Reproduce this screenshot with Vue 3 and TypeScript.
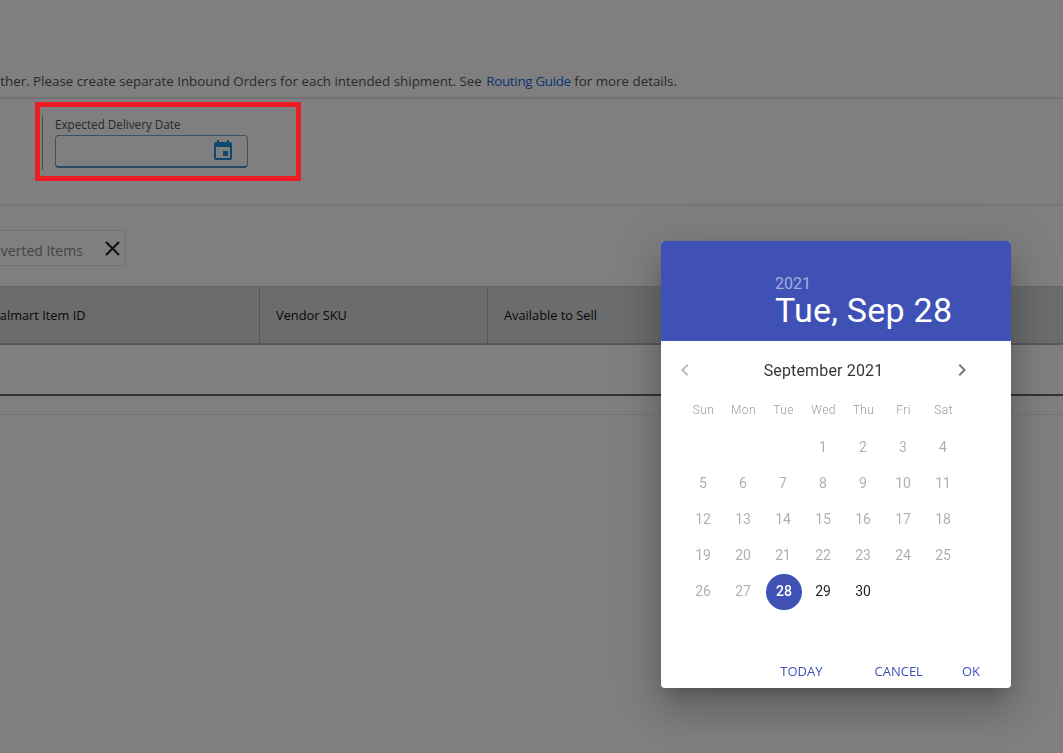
<script setup lang="ts">
const weekdays = ['Sun', 'Mon', 'Tue', 'Wed', 'Thu', 'Fri', 'Sat']
const blanks = [1, 2, 3]
const days = Array.from({ length: 30 }, (_, i) => i + 1)
const selected = 28
</script>

<template>
  <div class="page">
    <div class="notice">
      <p class="notice__text">
        Please ship these items together. Please create separate Inbound Orders for each intended shipment. See
        <a class="notice__link">Routing Guide</a> for more details.
      </p>
    </div>

    <section class="form-row">
      <div class="field">
        <label class="field__label">Expected Delivery Date</label>
        <div class="field__input">
          <svg width="24" height="24" viewBox="0 0 24 24" fill="currentColor">
            <path d="M17 12h-5v5h5v-5zM16 1v2H8V1H6v2H5c-1.11 0-1.99.9-1.99 2L3 19c0 1.1.89 2 2 2h14c1.1 0 2-.9 2-2V5c0-1.1-.9-2-2-2h-1V1h-2zm3 18H5V8h14v11z" />
          </svg>
        </div>
      </div>
    </section>

    <div class="chips">
      <div class="chip">
        <span class="chip__text">Converted Items</span>
        <svg width="24" height="24" viewBox="0 0 24 24" fill="none" stroke="#222" stroke-width="2">
          <path d="M6 6l13 13M19 6L6 19" />
        </svg>
      </div>
    </div>

    <div class="table-head">
      <div class="table-head__cell table-head__cell--first">Walmart Item ID</div>
      <div class="table-head__cell table-head__cell--sku">Vendor SKU</div>
      <div class="table-head__cell">Available to Sell</div>
    </div>
    <div class="table-body"></div>
    <div class="table-foot"></div>
  </div>

  <div class="scrim"></div>
  <div class="annotation"></div>

  <div class="picker">
    <header class="picker__head">
      <span class="picker__year">2021</span>
      <span class="picker__date">Tue, Sep 28</span>
    </header>

    <div class="picker__switch">
      <svg class="picker__arrow picker__arrow--off" width="24" height="24" viewBox="0 0 24 24" fill="currentColor">
        <path d="M15.41 7.41L14 6l-6 6 6 6 1.41-1.41L10.83 12z" />
      </svg>
      <span class="picker__month">September 2021</span>
      <svg class="picker__arrow" width="24" height="24" viewBox="0 0 24 24" fill="currentColor">
        <path d="M10 6L8.59 7.41 13.17 12l-4.58 4.59L10 18l6-6z" />
      </svg>
    </div>

    <div class="picker__weekdays">
      <span v-for="d in weekdays" :key="d">{{ d }}</span>
    </div>

    <div class="picker__days">
      <span v-for="b in blanks" :key="'b' + b"></span>
      <span
        v-for="d in days"
        :key="d"
        class="day"
        :class="{ 'day--on': d > selected, 'day--selected': d === selected }"
      >{{ d }}</span>
    </div>

    <footer class="picker__actions">
      <button class="picker__btn picker__btn--today">TODAY</button>
      <button class="picker__btn picker__btn--cancel">CANCEL</button>
      <button class="picker__btn">OK</button>
    </footer>
  </div>
</template>

<style>
html,
body {
  height: 100%;
  margin: 0;
  overflow: hidden;
  background: #fff;
}
</style>

<style scoped>
.page {
  width: 1063px;
  height: 753px;
  overflow: hidden;
  font-family: "Open Sans", "Liberation Sans", sans-serif;
  color: #555;
}
.notice {
  height: 25px;
  padding-top: 72px;
  border-bottom: 2px solid #e4e4e4;
}
.notice__text {
  margin: 0 0 0 -176px;
  font-size: 13.35px;
  line-height: 18px;
  white-space: nowrap;
}
.notice__link {
  color: #1668e0;
  margin-left: 1px;
  letter-spacing: -0.3px;
}
.form-row {
  height: 107px;
  box-sizing: border-box;
  padding: 16px 0 0 42px;
  border-bottom: 2px solid #eee;
}
.field {
  width: 206px;
  height: 55px;
  box-sizing: border-box;
  padding-left: 12px;
  border-left: 1px solid #999;
}
.field__label {
  display: block;
  font-size: 11.7px;
  line-height: 18px;
  color: #555;
}
.field__input {
  width: 193px;
  height: 33px;
  margin-top: 2px;
  box-sizing: border-box;
  border: 1px solid #6fa8cc;
  border-bottom: 2px solid #4a94c4;
  border-radius: 4px;
  display: flex;
  align-items: center;
  justify-content: flex-end;
  padding-right: 12px;
  color: #1a90dc;
}
.chips {
  height: 80px;
  box-sizing: border-box;
  padding-top: 24px;
}
.chip {
  width: 152px;
  height: 36px;
  margin-left: -26px;
  box-sizing: border-box;
  border: 1px solid #e2e2e2;
  border-radius: 4px;
  display: flex;
  align-items: center;
  justify-content: space-between;
  padding: 0 1px 0 0;
}
.chip__text {
  margin-top: 5px;
  font-size: 14px;
  color: #888;
  white-space: nowrap;
}
.table-head {
  height: 59px;
  box-sizing: border-box;
  background: #d7d8da;
  border-top: 1px solid #ccc;
  border-bottom: 2px solid #b0b0b0;
  display: flex;
  align-items: stretch;
}
.table-head__cell {
  display: flex;
  align-items: center;
  padding-left: 16px;
  font-size: 12.8px;
  color: #111;
  white-space: nowrap;
}
.table-head__cell--first {
  width: 260px;
  box-sizing: border-box;
  padding-left: 0;
  text-indent: -12px;
  border-right: 1px solid #aaa;
}
.table-head__cell--sku {
  width: 228px;
  box-sizing: border-box;
  border-right: 1px solid #aaa;
}
.table-body {
  height: 49px;
  border-bottom: 2px solid #666;
}
.table-foot {
  height: 18px;
  border-bottom: 1px solid #e9e9e9;
}
.scrim {
  position: fixed;
  inset: 0;
  background: rgba(0, 0, 0, 0.5);
}
.annotation {
  position: absolute;
  left: 35px;
  top: 102px;
  width: 266px;
  height: 79px;
  box-sizing: border-box;
  border: 5px solid #ed1c24;
}
.picker {
  position: absolute;
  left: 661px;
  top: 241px;
  width: 350px;
  height: 447px;
  display: flex;
  flex-direction: column;
  background: #fff;
  border-radius: 4px;
  overflow: hidden;
  font-family: Roboto, "Liberation Sans", sans-serif;
  box-shadow: 0 11px 15px -7px rgba(0, 0, 0, 0.2), 0 24px 38px 3px rgba(0, 0, 0, 0.14), 0 9px 46px 8px rgba(0, 0, 0, 0.12);
}
.picker__head {
  height: 100px;
  box-sizing: border-box;
  padding: 34px 0 0 114px;
  background: #3f51b5;
  color: #fff;
  display: flex;
  flex-direction: column;
  align-items: flex-start;
}
.picker__year {
  font-size: 16px;
  line-height: 17px;
  color: rgba(255, 255, 255, 0.54);
}
.picker__date {
  font-size: 34px;
  line-height: 36px;
  letter-spacing: 0.25px;
}
.picker__switch {
  width: 301px;
  margin: 17px 0 0 12px;
  display: flex;
  align-items: center;
  justify-content: space-between;
}
.picker__arrow {
  color: rgba(0, 0, 0, 0.54);
}
.picker__arrow--off {
  color: rgba(0, 0, 0, 0.26);
}
.picker__month {
  font-size: 16px;
  letter-spacing: 0.15px;
  color: rgba(0, 0, 0, 0.8);
}
.picker__weekdays,
.picker__days {
  display: grid;
  grid-template-columns: repeat(7, 40px);
  margin-left: 22px;
  text-align: center;
}
.picker__weekdays {
  margin-top: 20px;
  margin-left: 22.5px;
  font-size: 12px;
  font-weight: 300;
  line-height: 16px;
  letter-spacing: 0.4px;
  color: rgba(0, 0, 0, 0.42);
}
.picker__days {
  margin-top: 11px;
  grid-auto-rows: 36px;
}
.day {
  display: flex;
  align-items: center;
  justify-content: center;
  font-size: 14px;
  color: rgba(0, 0, 0, 0.32);
}
.day--on {
  color: rgba(0, 0, 0, 0.87);
}
.day--selected {
  width: 36px;
  height: 36px;
  margin: 1px 0 0 3px;
  padding-bottom: 2px;
  box-sizing: border-box;
  border-radius: 50%;
  background: #3f51b5;
  color: #fff;
  font-weight: 500;
}
.picker__actions {
  margin-top: auto;
  height: 26px;
  box-sizing: border-box;
  padding-right: 31px;
  display: flex;
  justify-content: flex-end;
  align-items: flex-start;
}
.picker__btn {
  padding: 0;
  border: 0;
  background: none;
  font-family: "Open Sans", "Liberation Sans", sans-serif;
  font-size: 13px;
  line-height: 18px;
  color: #3f51b5;
}
.picker__btn--today {
  margin-right: 52px;
}
.picker__btn--cancel {
  margin-right: 39px;
}
</style>
